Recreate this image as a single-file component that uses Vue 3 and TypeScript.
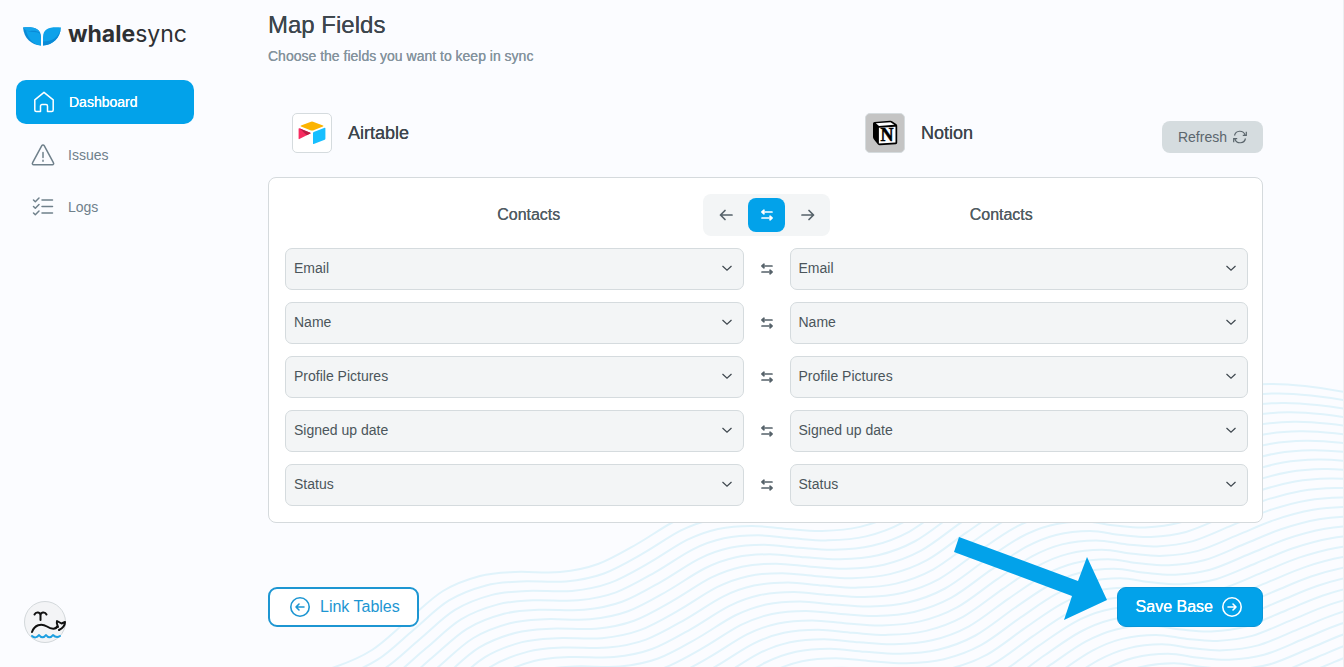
<script setup lang="ts">
import { reactive } from 'vue'

interface FieldPair {
  id: string
  left: string
  right: string
}

const fieldNames: string[] = ['Email', 'Name', 'Profile Pictures', 'Signed up date', 'Status']

const pairs = reactive<FieldPair[]>(
  fieldNames.map((name, i) => ({ id: `field-${i}`, left: name, right: name })),
)

type Point = [number, number]

// Crest and trough positions of the topmost wave.
const wave: Point[] = [
  [120, 720], [220, 700], [290, 679], [335, 667], [372, 650], [408, 620], [443, 591],
  [480, 576], [515, 572], [560, 572], [598, 564], [637, 544], [675, 521], [706, 510],
  [740, 507], [775, 510], [810, 512], [848, 508], [885, 494], [925, 466], [960, 443],
  [990, 431], [1024, 427], [1055, 431], [1085, 433], [1120, 428], [1160, 412],
  [1197, 397], [1235, 387], [1270, 384], [1305, 386], [1344, 392], [1400, 405],
]

function smoothPath(pts: Point[]): string {
  let d = `M${pts[0][0]} ${pts[0][1]}`
  for (let i = 0; i < pts.length - 1; i++) {
    const a = pts[Math.max(i - 1, 0)]
    const b = pts[i]
    const c = pts[i + 1]
    const e = pts[Math.min(i + 2, pts.length - 1)]
    const c1 = [b[0] + (c[0] - a[0]) / 6, b[1] + (c[1] - a[1]) / 6]
    const c2 = [c[0] - (e[0] - b[0]) / 6, c[1] - (e[1] - b[1]) / 6]
    d += `C${c1[0].toFixed(1)} ${c1[1].toFixed(1)} ${c2[0].toFixed(1)} ${c2[1].toFixed(1)} ${c[0]} ${c[1]}`
  }
  return d
}

const wavePath = smoothPath(wave)
const waveShifts = Array.from({ length: 34 }, (_, k) => `translate(${k * 6} ${k * 9.45})`)
</script>

<template>
  <div class="page">
    <svg class="waves" viewBox="0 0 1344 667" width="1344" height="667" aria-hidden="true">
      <path v-for="shift in waveShifts" :key="shift" :d="wavePath" :transform="shift" />
    </svg>

    <aside class="sidebar">
      <a class="brand" href="#" aria-label="whalesync">
        <svg width="38" height="19" viewBox="0 0 38 19" aria-hidden="true">
          <path d="M0 .5C9-.5 18 .5 18 10v8.500C8 18 1 11 0 .5Z" fill="#0a8ad6" />
          <path d="M3 3.500c7 3 11 0 14 3.500 1.200 3 1 7 1 11.500C10 18 5 11 3 3.500Z" fill="#0ea2ea" />
          <path d="M0 .5C7-.2 15 0 17 6 12 2 8 5 3 3.500Z" fill="#14a4ec" />
          <path d="M38 .5C29-.5 20 .5 20 10v8.500C30 18 37 11 38 .5Z" fill="#0ea2ea" />
          <path d="M38 .5c-2 10-9 14-18 14v4C30 18 37 11 38 .5Z" fill="#0a8ad6" />
        </svg>
        <span class="wordmark"><b>whale</b>sync</span>
      </a>

      <nav class="nav" aria-label="Main">
        <a class="nav-item active" href="#">
          <svg width="24" height="24" viewBox="0 0 24 24" aria-hidden="true">
            <path d="M2.800 9.800 12 2.300l9.200 7.500V20a1.500 1.500 0 0 1-1.500 1.500h-4.200V16a1.500 1.500 0 0 0-1.500-1.500h-4A1.500 1.500 0 0 0 8.500 16v5.500H4.300A1.500 1.500 0 0 1 2.800 20Z" />
          </svg>
          <span>Dashboard</span>
        </a>
        <a class="nav-item" href="#">
          <svg width="24" height="24" viewBox="0 0 24 24" aria-hidden="true">
            <path d="M10.800 2.600a1.400 1.400 0 0 1 2.400 0l9.300 17.300a1.200 1.200 0 0 1-1.100 1.800H2.600a1.200 1.200 0 0 1-1.100-1.800ZM12 9.500v5M12 17.300v1" />
          </svg>
          <span>Issues</span>
        </a>
        <a class="nav-item" href="#">
          <svg width="24" height="24" viewBox="0 0 24 24" aria-hidden="true">
            <path d="m2.500 5 1.800 1.700L8 3M2.500 11.500l1.800 1.700L8 9.500M2.500 18l1.800 1.700L8 16M11 5h10.500M11 11.500h10.500M11 18h10.500" />
          </svg>
          <span>Logs</span>
        </a>
      </nav>

      <button class="avatar" type="button" aria-label="Account">
        <svg width="44" height="42" viewBox="0 0 44 42" fill="none" stroke-linecap="round" stroke-linejoin="round" aria-hidden="true">
          <path d="M15.500 18v-4.500c0-3.500-4.500-4-6-1M15.500 13.500c0-3.500 4.500-4 6-1" stroke="#111" stroke-width="2" />
          <path d="M7 30c2.500-7 9-9 15-5.500 4.500 3 9 3 10.500-.5M34 28c3-1.500 6-4 6-8l-3.500 1.500L32 19c-1 3 1 4.500 1 6" stroke="#111" stroke-width="2" />
          <path d="M7 34c2 2 5 2 7-1 2 3 5 3 7 0 2 3 5 3 7 0 2 2 4 3 7 1" stroke="#1d9fe0" stroke-width="2" />
        </svg>
      </button>
    </aside>

    <main class="main">
      <h1>Map Fields</h1>
      <p class="subtitle">Choose the fields you want to keep in sync</p>

      <div class="apps">
        <div class="app">
          <span class="tile">
            <svg width="28" height="24" viewBox="0 0 28 24" aria-hidden="true">
              <path d="M13 .7q1-.4 2 0l10 3.800q1 .5 0 1L15 9.400q-1 .4-2 0L3 5.500q-1-.5 0-1Z" fill="#fcb400" />
              <path d="M15 12q0-.7.700-1l11-4.200q.700-.2.700.5v10.400q0 .7-.7 1l-11 4.200q-.7.200-.7-.5Z" fill="#18bfff" />
              <path d="M.600 7.700q0-.7.700-.5l11 4.500q.7.400 0 .8l-11 5.600q-.7.200-.7-.5Z" fill="#f82b60" />
              <path d="m1.300 7.200 11 4.500q.7.400 0 .8l-3.500 1.800Z" fill="#ba1e45" />
            </svg>
          </span>
          <h2>Airtable</h2>
        </div>
        <div class="app">
          <span class="tile notion">
            <svg width="26" height="26" viewBox="0 0 26 26" aria-hidden="true">
              <path d="M1 3.500Q1 2.200 2.500 2L18 .8q1.500-.1 2.500.6l4 2.900q.7.500.7 1.500v17q0 1.300-1.400 1.400L8 25.200q-1.200.1-2-.8l-4-5q-1-1.200-1-2.400Z" fill="#000" />
              <path d="m3.800 3.300 14.700-1.100 3.800 2.600L7 5.900Z" fill="#fff" />
              <path d="M6.900 7.800 23.500 6.700v15.900L6.900 23.600Z" fill="#fff" />
              <text x="15" y="21" text-anchor="middle" class="notion-n">N</text>
            </svg>
          </span>
          <h2>Notion</h2>
          <button class="refresh" type="button">
            Refresh
            <svg width="14" height="14" viewBox="0 0 14 14" aria-hidden="true">
              <path d="M1.500 5.500A5.500 5.500 0 0 1 12 4.800M13.300 1.800v3.500H9.800M12.500 8.500A5.500 5.500 0 0 1 2 9.200M.700 12.200V8.700h3.500" />
            </svg>
          </button>
        </div>
      </div>

      <section class="card" aria-label="Field mapping">
        <div class="card-head">
          <h3 class="table-left">Contacts</h3>
          <div class="direction" role="group" aria-label="Sync direction">
            <button type="button" aria-label="Sync left">
              <svg width="14" height="14" viewBox="0 0 14 14" aria-hidden="true"><path d="M13 7H1.500M6 2.500 1.500 7 6 11.500" /></svg>
            </button>
            <button type="button" class="on" aria-label="Sync both ways" aria-pressed="true">
              <svg width="14" height="14" viewBox="0 0 14 14" aria-hidden="true"><path d="M12 4H2M4 2.200 2 4l2 1.800M2 10h10M10 8.200 12 10l-2 1.800" /></svg>
            </button>
            <button type="button" aria-label="Sync right">
              <svg width="14" height="14" viewBox="0 0 14 14" aria-hidden="true"><path d="M1 7h11.500M8 2.500 12.500 7 8 11.500" /></svg>
            </button>
          </div>
          <h3 class="table-right">Contacts</h3>
        </div>

        <div v-for="pair in pairs" :key="pair.id" class="pair">
          <label class="field" :for="`${pair.id}-left`">
            <select :id="`${pair.id}-left`" v-model="pair.left" aria-label="Airtable field">
              <option v-for="name in fieldNames" :key="name">{{ name }}</option>
            </select>
            <svg width="12" height="12" viewBox="0 0 12 12" aria-hidden="true"><path d="M1.500 4 6 8.200 10.500 4" /></svg>
          </label>
          <svg class="both" width="14" height="14" viewBox="0 0 14 14" aria-hidden="true">
            <path d="M12 4H2M4 2.200 2 4l2 1.800M2 10h10M10 8.200 12 10l-2 1.800" />
          </svg>
          <label class="field" :for="`${pair.id}-right`">
            <select :id="`${pair.id}-right`" v-model="pair.right" aria-label="Notion field">
              <option v-for="name in fieldNames" :key="name">{{ name }}</option>
            </select>
            <svg width="12" height="12" viewBox="0 0 12 12" aria-hidden="true"><path d="M1.500 4 6 8.200 10.500 4" /></svg>
          </label>
        </div>
      </section>

      <div class="actions">
        <button class="action back" type="button">
          <svg width="20" height="20" viewBox="0 0 20 20" aria-hidden="true">
            <circle cx="10" cy="10" r="9.200" /><path d="M14 10H6M9 7l-3 3 3 3" />
          </svg>
          Link Tables
        </button>
        <div class="save-wrap">
          <svg class="pointer" width="153" height="83" viewBox="0 0 153 83" aria-hidden="true">
            <path d="M5 0 124 44 133 20 153 63 110 83 118 59 0 15Z" />
          </svg>
          <button class="action save" type="button">
            Save Base
            <svg width="20" height="20" viewBox="0 0 20 20" aria-hidden="true">
              <circle cx="10" cy="10" r="9.200" /><path d="M6 10h8M11 7l3 3-3 3" />
            </svg>
          </button>
        </div>
      </div>
    </main>
  </div>
</template>

<style>
body {
  margin: 0;
  background: #fbfcff;
}
</style>

<style scoped>
.page {
  position: relative;
  display: flex;
  box-sizing: border-box;
  min-height: 100vh;
  overflow: hidden;
  border-right: 1px solid #eceef1;
  background: #fbfcff;
  color: #3d464d;
  font-family: "Liberation Sans", Arial, sans-serif;
  font-size: 14px;
  line-height: 20px;
}

.waves {
  position: absolute;
  right: -1px;
  bottom: 0;
  fill: none;
  stroke: #e0f3fb;
  stroke-width: 2;
}

button {
  font: inherit;
  cursor: pointer;
}

h1,
h2,
h3,
p {
  margin: 0;
  font-weight: 400;
}

h1,
h2,
h3,
.subtitle,
.active,
.save {
  text-shadow: 0 0 0 currentColor;
}

.sidebar {
  position: relative;
  display: flex;
  flex: none;
  flex-direction: column;
  box-sizing: border-box;
  width: 210px;
  padding: 20px 16px 24px;
}

.brand {
  display: flex;
  align-items: center;
  gap: 7px;
  height: 28px;
  padding-left: 7px;
  color: #2e3033;
  text-decoration: none;
}

.brand svg {
  margin-top: 4px;
}

.wordmark {
  font-family: Inter, sans-serif;
  font-size: 23px;
  line-height: 28px;
}

.wordmark b {
  font-weight: 700;
}

.nav {
  display: flex;
  flex-direction: column;
  gap: 9px;
  margin-top: 32px;
}

.nav-item {
  display: flex;
  align-items: center;
  gap: 13px;
  height: 43px;
  padding: 0 15px;
  border-radius: 10px;
  color: #6f808b;
  text-decoration: none;
}

.nav-item svg {
  fill: none;
  stroke: currentColor;
  stroke-width: 1.5;
  stroke-linecap: round;
  stroke-linejoin: round;
}

.nav-item.active {
  height: 44px;
  padding: 0 16px;
  background: #02a2ea;
  color: #fff;
}

.avatar {
  display: flex;
  width: 42px;
  height: 42px;
  margin: auto 0 0 8px;
  padding: 0;
  border: 1px solid #d3d8db;
  border-radius: 50%;
  background: #f3f4f6;
}

.avatar svg {
  flex: none;
}

.main {
  position: relative;
  flex: 1;
  min-width: 0;
  padding: 9px 80px 40px 58px;
}

h1 {
  font-size: 24px;
  line-height: 32px;
}

.subtitle {
  margin-top: 5px;
  color: #84939d;
}

.apps {
  display: grid;
  grid-template-columns: 3fr 2fr;
  margin-top: 47px;
}

.app {
  display: flex;
  align-items: center;
  gap: 16px;
}

.app:first-child {
  padding-left: 24px;
}

.tile {
  display: flex;
  align-items: center;
  justify-content: center;
  box-sizing: border-box;
  width: 40px;
  height: 40px;
  border: 1px solid #d5dbde;
  border-radius: 5px;
  background: #fff;
}

.notion {
  background: #c4c4c4;
}

.notion-n {
  fill: #000;
  stroke: #000;
  stroke-width: 0.5;
  font-family: "Liberation Serif", serif;
  font-size: 18px;
  font-weight: 700;
}

h2 {
  font-size: 18px;
  line-height: 24px;
}

.refresh {
  display: flex;
  align-items: center;
  align-self: flex-end;
  gap: 6px;
  height: 32px;
  margin-left: auto;
  padding: 0 16px;
  border: 0;
  border-radius: 8px;
  background: #d5dcdf;
  color: #5b666d;
}

.refresh svg {
  fill: none;
  stroke: currentColor;
  stroke-width: 1.2;
}

.card {
  display: flex;
  flex-direction: column;
  gap: 12px;
  margin-top: 24px;
  padding: 16px 14px 16px 16px;
  border: 1px solid #d5dadd;
  border-radius: 8px;
  background: #fff;
}

.card-head {
  display: grid;
  grid-template-columns: 1fr 1fr;
  align-items: center;
}

h3 {
  grid-row: 1;
  font-size: 16px;
  line-height: 24px;
  text-align: center;
  color: #515c63;
}

.table-left {
  grid-column: 1;
  padding-left: 6px;
}

.table-right {
  grid-column: 2;
  padding-right: 12px;
}

.direction {
  display: flex;
  grid-row: 1;
  grid-column: 1 / 3;
  justify-self: center;
  gap: 4px;
  padding: 4px;
  border-radius: 8px;
  background: #f3f5f6;
}

.direction button {
  display: flex;
  align-items: center;
  justify-content: center;
  width: 37px;
  height: 34px;
  padding: 0;
  border: 0;
  border-radius: 8px;
  background: transparent;
  color: #56626a;
}

.direction .on {
  background: #02a2ea;
  color: #fff;
}

.direction svg,
.both {
  fill: none;
  stroke: currentColor;
  stroke-width: 1.7;
  stroke-linecap: round;
  stroke-linejoin: round;
}

.pair {
  display: grid;
  grid-template-columns: 1fr 46px 1fr;
  align-items: center;
}

.both {
  justify-self: center;
  color: #56626a;
}

.field {
  display: grid;
  align-items: center;
}

.field select {
  grid-area: 1 / 1;
  box-sizing: border-box;
  width: 100%;
  height: 42px;
  padding: 0 32px 2px 8px;
  border: 1px solid #d5dbde;
  border-radius: 7px;
  appearance: none;
  background: #f3f5f6;
  color: #4b555b;
  font: inherit;
}

.field svg {
  grid-area: 1 / 1;
  justify-self: end;
  margin: 0 11px 2px 0;
  fill: none;
  stroke: #3d464d;
  stroke-width: 1.2;
  pointer-events: none;
}

.actions {
  display: flex;
  justify-content: space-between;
  margin-top: 64px;
}

.action {
  display: flex;
  align-items: center;
  box-sizing: border-box;
  height: 40px;
  border-radius: 9px;
  font-size: 16px;
}

.action svg {
  fill: none;
  stroke: currentColor;
  stroke-width: 1.6;
  stroke-linecap: round;
  stroke-linejoin: round;
}

.back {
  gap: 10px;
  padding: 0 17px 0 20px;
  border: 2px solid #1d96d2;
  background: #fff;
  color: #1d96d2;
}

.save-wrap {
  position: relative;
}

.save {
  gap: 9px;
  padding: 0 20px 0 18px;
  border: 1px solid #0895d8;
  background: #02a2ea;
  color: #fff;
}

.pointer {
  position: absolute;
  right: calc(100% + 10px);
  bottom: 7px;
  fill: #02a2ea;
  pointer-events: none;
}
</style>
